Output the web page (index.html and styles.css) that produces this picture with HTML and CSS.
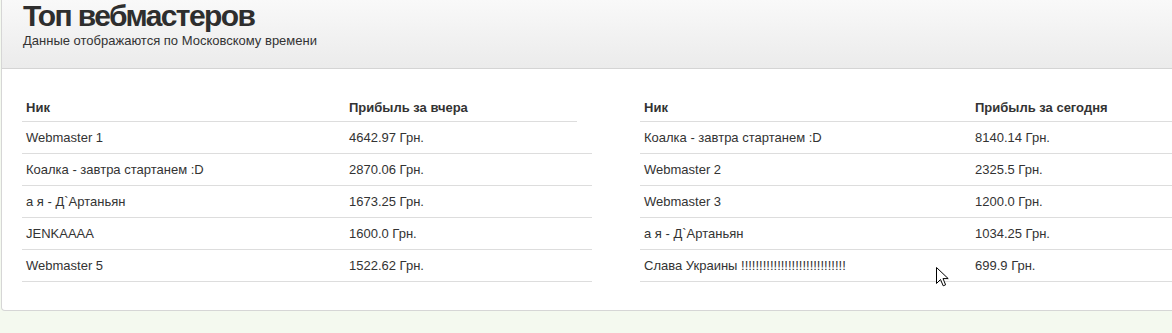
FILE: index.html
```html
<!DOCTYPE html>
<html lang="ru">
<head>
<meta charset="utf-8">
<title>Топ вебмастеров</title>
<link rel="stylesheet" href="styles.css">
</head>
<body>
<div class="panel">
  <div class="panel-head">
    <h1 class="title">Топ вебмастеров</h1>
    <p class="subtitle">Данные отображаются по Московскому времени</p>
  </div>
  <div class="tables">
    <div class="board board-left">
      <div class="row row-head"><span>Ник</span><span>Прибыль за вчера</span></div>
      <div class="row"><span>Webmaster 1</span><span>4642.97 Грн.</span></div>
      <div class="row"><span>Коалка - завтра стартанем :D</span><span>2870.06 Грн.</span></div>
      <div class="row"><span>а я - Д`Артаньян</span><span>1673.25 Грн.</span></div>
      <div class="row"><span>JENKAAAA</span><span>1600.0 Грн.</span></div>
      <div class="row"><span>Webmaster 5</span><span>1522.62 Грн.</span></div>
    </div>
    <div class="board board-right">
      <div class="row row-head"><span>Ник</span><span>Прибыль за сегодня</span></div>
      <div class="row"><span>Коалка - завтра стартанем :D</span><span>8140.14 Грн.</span></div>
      <div class="row"><span>Webmaster 2</span><span>2325.5 Грн.</span></div>
      <div class="row"><span>Webmaster 3</span><span>1200.0 Грн.</span></div>
      <div class="row"><span>а я - Д`Артаньян</span><span>1034.25 Грн.</span></div>
      <div class="row"><span>Слава Украины !!!!!!!!!!!!!!!!!!!!!!!!!!!!!</span><span>699.9 Грн.</span></div>
    </div>
  </div>
</div>
<svg class="cursor" width="13" height="21" viewBox="0 0 13 21" aria-hidden="true">
  <path d="M0.5 0.5 L0.5 16.5 L4.5 12.5 L7.2 18.8 L9.6 17.8 L7 11.6 L12.2 11.6 Z" fill="#fff" stroke="#000" stroke-width="1" stroke-linejoin="miter"/>
</svg>
</body>
</html>
```

FILE: styles.css
```css
html, body {
  margin: 0;
  padding: 0;
}
body {
  background: #f4f9ef;
  font-family: "Liberation Sans", Arial, sans-serif;
  color: #333;
  overflow: hidden;
  position: relative;
  height: 333px;
}
.panel {
  margin-left: 1px;
  width: 1260px;
  background: #fff;
  border: 1px solid #d6d6d6;
  border-top: none;
  border-radius: 0 0 0 4px;
}
.panel-head {
  height: 69px;
  box-sizing: border-box;
  padding: 0 0 0 21px;
  background: linear-gradient(#f9f9f9, #ebebeb);
  border-bottom: 1px solid #d4d4d4;
}
.title {
  margin: 0;
  padding-top: 1px;
  font-size: 30px;
  line-height: 30px;
  font-weight: bold;
  letter-spacing: -1.6px;
  color: #2e2e2e;
}
.subtitle {
  margin: 3px 0 0 0;
  font-size: 13px;
  line-height: 14px;
  color: #333;
}
.tables {
  display: flex;
  gap: 48px;
  padding: 21px 0 28px 20px;
}
.board {
  width: 570px;
  display: flex;
  flex-direction: column;
  font-size: 13px;
}
.row {
  display: grid;
  padding: 8px 0 8px 4px;
  line-height: 15px;
  border-bottom: 1px solid #dddddd;
}
.board-left .row {
  grid-template-columns: 323px 1fr;
}
.board-right .row {
  grid-template-columns: 331px 1fr;
}
.row-head {
  font-weight: bold;
  padding-top: 10px;
  padding-bottom: 6px;
  color: #333;
}
.board-left .row-head {
  margin-right: 15px;
}
.cursor {
  position: absolute;
  left: 936px;
  top: 267px;
}
```
